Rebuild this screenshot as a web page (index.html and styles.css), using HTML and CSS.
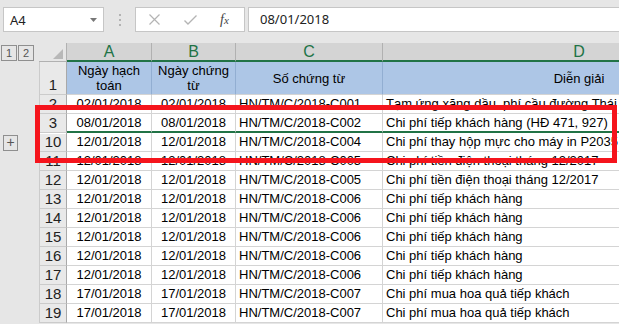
FILE: index.html
```html
<!DOCTYPE html>
<html lang="vi">
<head>
    <meta charset="UTF-8">
    <title>Sổ chứng từ</title>
    <link rel="stylesheet" href="styles.css">
</head>
<body>

<div class="toolbar">
    <div class="namebox">
        <span>A4</span>
        <svg class="caret" width="7" height="4" viewBox="0 0 7 4"><path d="M0 0h7L3.5 4z" fill="#777"/></svg>
    </div>
    <div class="grip"><i></i><i></i><i></i></div>
    <div class="fxbox">
        <svg class="ico-x" width="11" height="11" viewBox="0 0 11 11"><path d="M0.5 0.5l10 10M10.5 0.5l-10 10" stroke="#b4b4b4" stroke-width="1.2" fill="none"/></svg>
        <svg class="ico-ok" width="13" height="10" viewBox="0 0 13 10"><path d="M0.5 5.5l3.5 3.5l8.5-8.5" stroke="#b4b4b4" stroke-width="1.4" fill="none"/></svg>
        <span class="fx">f<span>x</span></span>
    </div>
    <div class="formula">08/01/2018</div>
</div>

<div class="sheet">
    <div class="row head">
        <div class="gut"><span class="lvl">1</span><span class="lvl">2</span></div>
        <div class="corner"><i></i></div>
        <div class="ch">A</div>
        <div class="ch">B</div>
        <div class="ch">C</div>
        <div class="ch">D</div>
    </div>
    <div class="row title">
        <div class="gut"></div>
        <div class="rh">1</div>
        <div class="hd">Ngày hạch<br>toán</div>
        <div class="hd">Ngày chứng<br>từ</div>
        <div class="hd">Số chứng từ</div>
        <div class="hd">Diễn giải</div>
    </div>
    <div class="row">
        <div class="gut"></div>
        <div class="rh">2</div>
        <div class="c ctr">02/01/2018</div>
        <div class="c ctr">02/01/2018</div>
        <div class="c">HN/TM/C/2018-C001</div>
        <div class="c">Tạm ứng xăng dầu, phí cầu đường Thái</div>
    </div>
    <div class="row sel-above">
        <div class="gut"></div>
        <div class="rh">3</div>
        <div class="c ctr">08/01/2018</div>
        <div class="c ctr">08/01/2018</div>
        <div class="c">HN/TM/C/2018-C002</div>
        <div class="c">Chi phí tiếp khách hàng (HĐ 471, 927)</div>
    </div>
    <div class="row">
        <div class="gut"><span class="expand">+</span></div>
        <div class="rh hidden-above">10</div>
        <div class="c ctr">12/01/2018</div>
        <div class="c ctr">12/01/2018</div>
        <div class="c">HN/TM/C/2018-C004</div>
        <div class="c">Chi phí thay hộp mực cho máy in P2035</div>
    </div>
    <div class="row">
        <div class="gut"></div>
        <div class="rh">11</div>
        <div class="c ctr">12/01/2018</div>
        <div class="c ctr">12/01/2018</div>
        <div class="c">HN/TM/C/2018-C005</div>
        <div class="c">Chi phí tiền điện thoại tháng 12/2017</div>
    </div>
    <div class="row">
        <div class="gut"></div>
        <div class="rh">12</div>
        <div class="c ctr">12/01/2018</div>
        <div class="c ctr">12/01/2018</div>
        <div class="c">HN/TM/C/2018-C005</div>
        <div class="c">Chi phí tiền điện thoại tháng 12/2017</div>
    </div>
    <div class="row">
        <div class="gut"></div>
        <div class="rh">13</div>
        <div class="c ctr">12/01/2018</div>
        <div class="c ctr">12/01/2018</div>
        <div class="c">HN/TM/C/2018-C006</div>
        <div class="c">Chi phí tiếp khách hàng</div>
    </div>
    <div class="row">
        <div class="gut"></div>
        <div class="rh">14</div>
        <div class="c ctr">12/01/2018</div>
        <div class="c ctr">12/01/2018</div>
        <div class="c">HN/TM/C/2018-C006</div>
        <div class="c">Chi phí tiếp khách hàng</div>
    </div>
    <div class="row">
        <div class="gut"></div>
        <div class="rh">15</div>
        <div class="c ctr">12/01/2018</div>
        <div class="c ctr">12/01/2018</div>
        <div class="c">HN/TM/C/2018-C006</div>
        <div class="c">Chi phí tiếp khách hàng</div>
    </div>
    <div class="row">
        <div class="gut"></div>
        <div class="rh">16</div>
        <div class="c ctr">12/01/2018</div>
        <div class="c ctr">12/01/2018</div>
        <div class="c">HN/TM/C/2018-C006</div>
        <div class="c">Chi phí tiếp khách hàng</div>
    </div>
    <div class="row">
        <div class="gut"></div>
        <div class="rh">17</div>
        <div class="c ctr">12/01/2018</div>
        <div class="c ctr">12/01/2018</div>
        <div class="c">HN/TM/C/2018-C006</div>
        <div class="c">Chi phí tiếp khách hàng</div>
    </div>
    <div class="row">
        <div class="gut"></div>
        <div class="rh">18</div>
        <div class="c ctr">17/01/2018</div>
        <div class="c ctr">17/01/2018</div>
        <div class="c">HN/TM/C/2018-C007</div>
        <div class="c">Chi phí mua hoa quả tiếp khách</div>
    </div>
    <div class="row">
        <div class="gut"></div>
        <div class="rh">19</div>
        <div class="c ctr">17/01/2018</div>
        <div class="c ctr">17/01/2018</div>
        <div class="c">HN/TM/C/2018-C007</div>
        <div class="c">Chi phí mua hoa quả tiếp khách</div>
    </div>
</div>

<!-- khung đỏ đánh dấu các dòng bị ẩn -->
<div class="mark"></div>

</body>
</html>
```

FILE: styles.css
```css
body {
    margin: 0;
    width: 619px;
    height: 324px;
    overflow: hidden;
    position: relative;
    background-color: #e6e6e6;
    font-family: "Liberation Sans", Arial, sans-serif;
    color: #000;
}

/* thanh công thức */
.toolbar {
    display: flex;
    align-items: flex-start;
    height: 43px;
    padding: 7px 0 0 3px;
    box-sizing: border-box;
}

.namebox {
    width: 101px;
    height: 25px;
    box-sizing: border-box;
    border: 1px solid #c6c6c6;
    background-color: #fff;
    display: flex;
    align-items: center;
    justify-content: space-between;
    padding: 0 6px 0 6px;
    font: 13px "Noto Sans", sans-serif;
    color: #222;
}

.grip {
    width: 31px;
    height: 25px;
    display: flex;
    flex-direction: column;
    align-items: center;
    justify-content: center;
    gap: 3px;
}

.grip i {
    width: 2px;
    height: 2px;
    background-color: #b3b3b3;
}

.fxbox {
    width: 110px;
    height: 25px;
    box-sizing: border-box;
    border: 1px solid #c6c6c6;
    background-color: #fff;
    display: flex;
    align-items: center;
    padding-left: 13px;
}

.ico-ok {
    margin-left: 24px;
    margin-top: 1px;
}

.fx {
    margin-left: 23px;
    font: italic 14px "Liberation Serif", serif;
    color: #444;
}

.fx span {
    font-size: 11px;
}

.formula {
    flex: 1;
    margin-left: 3px;
    height: 25px;
    box-sizing: border-box;
    border: 1px solid #c6c6c6;
    border-right: 0;
    background-color: #fff;
    padding-left: 11px;
    font: 13px/23px "Noto Sans", sans-serif;
    color: #222;
}

/* bảng tính */
.sheet {
    width: 619px;
    overflow: hidden;
}

.row {
    display: grid;
    grid-template-columns: 39px 28px 85px 84px 147px 393px;
    height: 19px;
}

.row > div {
    box-sizing: border-box;
    white-space: nowrap;
    overflow: hidden;
}

.row.title {
    height: 33px;
}

.gut {
    background-color: #e6e6e6;
}

.lvl {
    display: inline-block;
    box-sizing: border-box;
    width: 16px;
    height: 16px;
    margin-left: 1px;
    border: 1px solid #8f8f8f;
    font-size: 11px;
    line-height: 14px;
    text-align: center;
    color: #555;
}

.expand {
    display: inline-block;
    box-sizing: border-box;
    width: 15px;
    height: 16px;
    margin: 1px 0 0 3px;
    border: 1px solid #8f8f8f;
    font-size: 14px;
    line-height: 13px;
    text-align: center;
    color: #555;
}

.corner {
    background-color: #e6e6e6;
    border-right: 1px solid #b1b1b1;
    border-bottom: 1px solid #b1b1b1;
    display: flex;
    justify-content: flex-end;
    align-items: flex-end;
    padding: 0 3px 2px 0;
}

.corner i {
    width: 0;
    height: 0;
    border-left: 10px solid transparent;
    border-bottom: 10px solid #b8b8b8;
}

.ch {
    background-color: #d4d4d4;
    border-right: 1px solid #b1b1b1;
    border-bottom: 2px solid #217346;
    color: #217346;
    font-size: 16px;
    line-height: 18px;
    text-align: center;
}

.rh {
    background-color: #e9e9e9;
    border-right: 1px solid #a9a9a9;
    border-bottom: 1px solid #cbcbcb;
    border-left: 1px solid #cbcbcb;
    font-size: 15px;
    line-height: 18px;
    text-align: center;
    color: #222;
    display: flex;
    align-items: flex-end;
    justify-content: center;
}

.rh.hidden-above {
    box-shadow: inset 0 1px 0 #fff;
}

.hd {
    background-color: #adc6e6;
    border-right: 1px solid #92aed2;
    border-bottom: 1px solid #d4d4d4;
    font-size: 13px;
    line-height: 15px;
    text-align: center;
    display: flex;
    align-items: center;
    justify-content: center;
}

.c {
    background-color: #fff;
    border-right: 1px solid #d4d4d4;
    border-bottom: 1px solid #d4d4d4;
    font-size: 13px;
    line-height: 18px;
    padding: 0 3px;
}

.c.ctr {
    text-align: center;
}

.sel-above .c {
    border-bottom: 2px solid #217346;
}

.mark {
    position: absolute;
    left: 35px;
    top: 105px;
    width: 582px;
    height: 58px;
    box-sizing: border-box;
    border: 5px solid #f5141c;
}
```
